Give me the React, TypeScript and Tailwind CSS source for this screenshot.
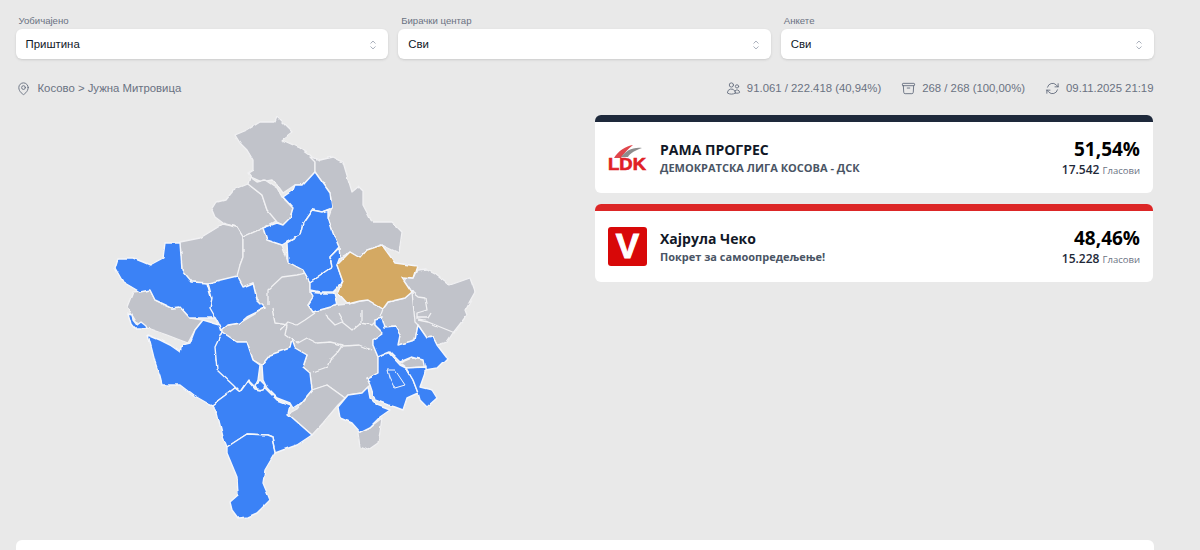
import React from "react";
import {
  HiOutlineArchiveBox,
  HiOutlineArrowPath,
  HiOutlineChevronUpDown,
  HiOutlineMapPin,
  HiOutlineUsers,
} from "react-icons/hi2";

const GRAY = "#c1c3ca";
const BLUE = "#3b82f6";
const GOLD = "#d4a964";

const grayRegions = [
  "235,135 240,143 247,150 253,160 253,170 248,173 251,177 262,182 272,180 278,186 283,193 295,185 303,185 315,172 315,160 310,155 300,148 282,140 292,132 277,117 275,122 260,122 247,130",
  "310,157 320,160 333,157 343,162 352,192 358,187 363,192 363,205 372,222 392,222 402,232 399,253 382,245 367,250 360,258 350,252 340,258 339,247 333,233 328,218 332,207 330,193 315,172 315,162",
  "212,210 217,202 225,200 233,190 248,184 262,195 267,210 278,220 263,228 243,237 237,227 223,223 215,217",
  "250,177 257,182 265,180 277,188 282,197 293,208 290,218 283,225 277,222 267,210 262,195 248,184",
  "180,242 200,238 223,224 237,227 243,237 243,257 240,265 243,269 237,276 227,282 208,283 190,282 182,270",
  "127,307 133,292 150,290 155,300 172,308 180,307 190,318 203,320 195,330 188,343 180,340 167,335 147,328 137,323",
  "243,237 263,228 267,240 282,245 288,262 303,270 310,282 310,292 313,297 308,305 313,312 327,308 338,305 348,304 360,301 368,300 383,309 388,302 405,298 412,292 425,300 440,320 447,342 437,345 433,337 427,338 418,325 415,340 398,345 400,335 395,327 385,328 382,318 375,320 375,325 383,333 373,340 373,345 378,357 378,372 367,378 370,385 362,393 348,395 338,405 345,398 327,385 312,390 310,373 303,367 307,355 295,348 292,340 290,348 270,355 262,365 253,360 247,342 237,342 222,332 220,330 228,325 240,323 265,308 257,300 253,283 243,287 237,276 240,265 243,257",
  "417,270 427,269 435,273 450,285 470,278 475,292 465,310 467,315 453,333 447,342 437,345 433,337 427,338 418,325 415,322 412,292 402,277 413,278",
  "288,414 297,409 312,390 327,385 345,398 338,405 323,423 312,435",
  "358,433 370,427 382,418 380,432 378,443 368,450 360,447",
  "400,363 412,358 425,360 425,367 406,368",
];

const blueRegions = [
  "315,172 330,193 332,208 322,212 312,210 303,223 300,235 287,242 282,245 267,240 263,228 277,223 283,225 290,218 293,208 283,197 293,190 295,185 303,185",
  "312,210 322,212 328,210 328,218 333,233 339,247 330,257 332,267 310,282 303,270 288,262 287,243 300,235 303,223",
  "339,248 340,257 337,265 343,282 338,287 333,292 320,292 310,290 310,282 332,267 330,257",
  "310,292 318,293 335,293 338,305 327,308 313,312 308,305 313,297",
  "165,243 180,243 182,270 192,282 207,283 212,300 218,318 200,318 190,318 180,307 172,308 155,300 150,290 140,292 123,282 115,268 118,258 133,258 143,262 150,265 163,258",
  "208,283 237,276 243,287 253,283 257,300 265,308 247,317 240,323 228,325 222,330 218,322 210,308 212,298",
  "128,313 132,314 133,320 137,325 141,322 146,326 147,329 135,329 131,324",
  "148,335 160,340 170,345 180,352 182,345 190,343 195,330 203,320 220,325 222,332 217,345 216,360 220,370 235,382 235,388 212,405 207,403 193,395 180,385 162,385 160,377 155,362 152,350",
  "222,332 237,342 247,342 253,360 260,365 258,380 255,387 248,380 240,392 233,385 217,370 215,347",
  "262,365 270,355 290,348 292,340 295,348 307,355 303,367 310,373 312,390 302,402 293,408 290,403 277,398 267,388 263,380",
  "260,380 265,385 263,390 257,389 255,385",
  "212,405 235,388 240,392 248,381 255,389 260,390 265,388 277,400 290,405 288,414 312,435 297,445 283,450 275,453 272,437 267,435 247,434 227,447 223,437 217,413",
  "227,453 227,447 247,434 267,435 272,437 275,453 265,470 263,483 268,495 270,500 257,513 248,517 238,518 232,510 230,502 238,495 237,477 232,465",
  "338,407 348,395 362,393 368,387 370,398 377,405 390,410 380,417 370,427 360,432 352,423 340,418",
  "378,358 388,352 400,365 406,368 413,380 418,393 407,398 403,410 395,407 388,405 375,400 370,385 367,378 378,372",
  "375,320 382,318 385,328 395,327 400,335 398,345 415,340 418,325 427,338 433,337 437,345 447,358 437,368 425,370 423,360 412,357 400,362 390,352 378,357 373,345 373,340 383,333 375,325",
  "406,368 425,367 425,373 420,387 432,390 437,398 427,407 420,400 418,393 413,380",
];

const goldRegion =
  "382,245 395,263 417,266 413,278 402,277 412,292 405,298 388,302 383,309 368,300 360,301 348,304 338,293 343,282 337,265 350,252 360,258 367,250";

const borderLines = [
  "268,305 268,290 282,277 297,275 305,273",
  "272,308 275,323 287,325 285,335 292,340",
  "292,340 298,343 307,338 317,343 330,342 343,345 338,352 330,360 327,367 313,372",
  "343,346 360,345 372,350",
  "280,330 288,322 297,325 305,320 315,313",
  "325,315 335,325 342,322 352,330 360,323 372,325 375,322",
  "338,313 343,322",
  "362,310 362,322",
  "383,309 380,317",
  "417,318 427,318 430,313",
  "418,320 428,322 455,333",
  "412,292 418,297 425,298 427,310 417,313 417,320",
];

function Field({ label, value }: { label: string; value: string }) {
  return (
    <div className="flex-1">
      <div className="pl-[3px] text-[9.6px] leading-[13px] text-gray-500">{label}</div>
      <div className="mt-[2px] flex h-[30px] items-center justify-between rounded-md bg-white pl-[10px] pr-[8px] pt-px text-[11.4px] text-gray-900 shadow-sm">
        <span>{value}</span>
        <HiOutlineChevronUpDown className="text-gray-400" size={14} />
      </div>
    </div>
  );
}

function LdkLogo() {
  return (
    <svg viewBox="0 0 39 39" className="h-[39px] w-[39px] shrink-0">
      <path d="M6 20 C10 13 18 8 25 7 C20 11 16 15 13 20 Z" fill="#e0464c" />
      <path d="M13 19 C18 13 24 9 34 10 C28 12 22 15 20 19 Z" fill="#8d8d8d" />
      <text
        x="0"
        y="32"
        textLength="38"
        lengthAdjust="spacingAndGlyphs"
        fontFamily="'Liberation Sans', sans-serif"
        fontWeight="700"
        fontSize="16.5"
        fill="#e02026"
        stroke="#e02026"
        strokeWidth="0.6"
      >
        LDK
      </text>
    </svg>
  );
}

function VLogo() {
  return (
    <div className="flex h-[39px] w-[39px] shrink-0 items-center justify-center rounded-[3px] bg-[#d80808] font-['Liberation_Sans',sans-serif] text-[35px] font-bold text-white [-webkit-text-stroke:1px_white]">
      V
    </div>
  );
}

function Candidate({
  bar,
  logo,
  name,
  party,
  percent,
  votes,
}: {
  bar: string;
  logo: React.ReactNode;
  name: string;
  party: string;
  percent: string;
  votes: string;
}) {
  return (
    <div className="h-[78px] overflow-hidden rounded-md bg-white">
      <div className={`h-[7px] ${bar}`}></div>
      <div className="flex h-[71px] items-center justify-between pl-[13px] pr-[13px]">
        <div className="flex items-center gap-[13px]">
          {logo}
          <div className="font-['Open_Sans',sans-serif]">
            <div className="text-sm font-bold leading-[20px] text-[#111827]">{name}</div>
            <div className="text-[11px] font-bold leading-[16px] text-gray-600">{party}</div>
          </div>
        </div>
        <div className="text-right font-['Open_Sans',sans-serif]">
          <div className="text-[19px] font-bold leading-[26px] text-black">{percent}</div>
          <div className="text-xs font-semibold leading-[16px] text-gray-800">
            {votes} <span className="text-[9.5px] font-normal text-gray-500">Гласови</span>
          </div>
        </div>
      </div>
    </div>
  );
}

export default function App() {
  return (
    <div className="h-[550px] overflow-hidden bg-[#e9e9e9] font-['Liberation_Sans',sans-serif]">
      <div className="ml-[15.5px] w-[1138px] pt-[14px]">
        <div className="flex gap-[10px]">
          <Field label="Уобичајено" value="Приштина" />
          <Field label="Бирачки центар" value="Сви" />
          <Field label="Анкете" value="Сви" />
        </div>

        <div className="mt-[21px] flex h-[16px] items-center justify-between text-[11.35px] text-gray-500">
          <div className="flex items-center gap-[7px]">
            <HiOutlineMapPin size={15} />
            <span>Косово &gt; Јужна Митровица</span>
          </div>
          <div className="flex items-center gap-[20px]">
            <span className="flex items-center gap-[6px]">
              <HiOutlineUsers size={15} />
              91.061 / 222.418 (40,94%)
            </span>
            <span className="flex items-center gap-[6px]">
              <HiOutlineArchiveBox size={15} />
              268 / 268 (100,00%)
            </span>
            <span className="flex items-center gap-[6px]">
              <HiOutlineArrowPath size={15} />
              09.11.2025 21:19
            </span>
          </div>
        </div>

        <div className="mt-[15px] flex h-[429px] justify-between">
          <svg viewBox="100 111 390 420" className="ml-[84.5px] h-[420px] w-[390px]">
            {/* roughen the straight polygon edges so borders look like real map outlines */}
            <filter id="rough" x="-5%" y="-5%" width="110%" height="110%">
              <feTurbulence type="fractalNoise" baseFrequency="0.09" numOctaves="2" seed="4" />
              <feDisplacementMap in="SourceGraphic" scale="3" xChannelSelector="R" yChannelSelector="G" />
            </filter>
            <g filter="url(#rough)">
              <g stroke="#f1f1f3" strokeWidth="1.3" strokeLinejoin="round">
                {grayRegions.map((points) => (
                  <polygon key={points} points={points} fill={GRAY} />
                ))}
              </g>
              <g fill="none" stroke="#f1f1f3" strokeWidth="1.3" strokeLinejoin="round">
                {borderLines.map((points) => (
                  <polyline key={points} points={points} />
                ))}
              </g>
              <g stroke="#f4f6fb" strokeWidth="1.4" strokeLinejoin="round">
                {blueRegions.map((points) => (
                  <polygon key={points} points={points} fill={BLUE} />
                ))}
                <polygon points="388,370 395,370 405,385 395,388 390,378" fill={BLUE} strokeWidth="1" />
                <polygon points={goldRegion} fill={GOLD} />
              </g>
            </g>
          </svg>
          <div className="mr-[0.5px] flex w-[558px] flex-col gap-[11px] pt-[4px]">
            <Candidate
              bar="bg-[#1e293b]"
              logo={<LdkLogo />}
              name="РАМА ПРОГРЕС"
              party="ДЕМОКРАТСКА ЛИГА КОСОВА - ДСК"
              percent="51,54%"
              votes="17.542"
            />
            <Candidate
              bar="bg-[#dc2626]"
              logo={<VLogo />}
              name="Хајрула Чеко"
              party="Покрет за самоопредељење!"
              percent="48,46%"
              votes="15.228"
            />
          </div>
        </div>

        <div className="h-[200px] rounded-md bg-white"></div>
      </div>
    </div>
  );
}
